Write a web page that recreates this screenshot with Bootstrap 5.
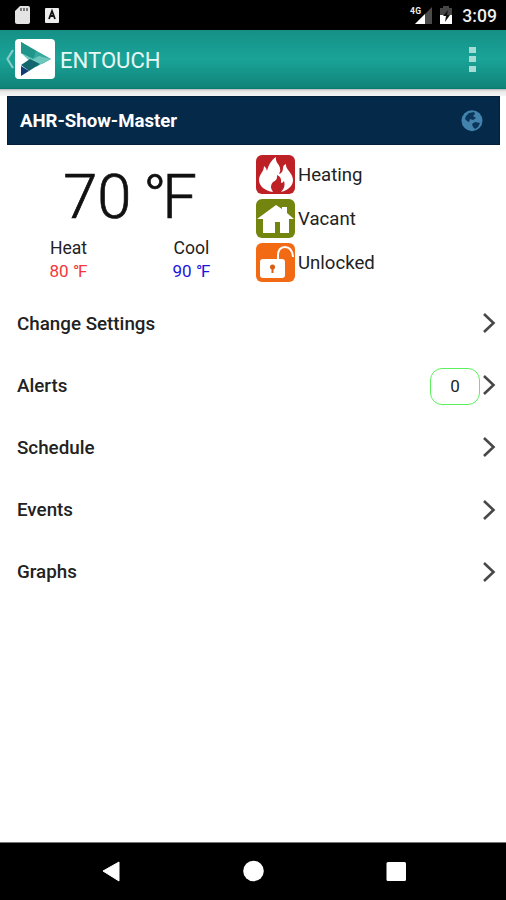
<!DOCTYPE html>
<html lang="en">
<head>
<meta charset="utf-8">
<meta name="viewport" content="width=device-width, initial-scale=1">
<title>ENTOUCH</title>
<link href="https://cdn.jsdelivr.net/npm/bootstrap@5.3.0/dist/css/bootstrap.min.css" rel="stylesheet">
<style>
body{font-family:Roboto,sans-serif;height:900px;color:#222;overflow:hidden;line-height:1}
svg{display:block;flex:none}
.status{height:30px;background:#000;padding:0 9px 0 14px}
.clock{font-size:17.6px;font-weight:500;color:#eee;margin-left:8px;padding-top:3px}
.network{font-size:8.5px}
.appbar{height:59px;background:linear-gradient(#159086,#1aa398 50%,#108378);border-bottom:1px solid #087a70;padding:0 28px 0 5px}
.title{font-size:22.1px;color:#e8f8f5;margin-left:5px;padding-top:3px}
.under{height:7px;background:linear-gradient(#b5b9b9,#eaeaea 35%,#f5f5f5)}
.unit{height:49px;margin:0 6px 0 7px;background:#052a49;border:1px solid #031f3b;padding:0 16px 0 12px}
.unit-name{font-size:18.6px;font-weight:700;color:#fff;padding-top:2px}
.readings{height:148px}
.temps{width:246px;margin-left:7px;padding-top:19px}
.now{font-size:61.5px;font-weight:300;-webkit-text-stroke:.7px #111;color:#111;line-height:66px;word-spacing:-.05em}
.deg{letter-spacing:-.07em}
.point{width:123px;font-size:17.6px;line-height:23px;padding-top:7px}
.point .heat,.point .cool{font-size:17px}
.heat{color:#f5363a}.cool{color:#1c16dc}
.states{margin:7px 0 0 3px}
.state{height:44.3px;font-size:18.6px;gap:3px}
.state span{padding-top:2px}
.entry{height:62.2px;padding:0 11px 0 17px;font-size:18.8px;font-weight:500;border:0}
.entry svg{margin-right:-1px}
.count{width:50px;height:37px;border:1.5px solid #5df05d;border-radius:12px;font-size:17px;font-weight:400;margin-right:2px}
.keys{height:58px;background:#000;border-top:1px solid #777}
.keys svg{width:100%}
</style>
<script src="https://cdn.jsdelivr.net/npm/bootstrap@5.3.0/dist/js/bootstrap.bundle.min.js"></script>
</head>
<body class="d-flex flex-column bg-white">
<div class="status d-flex align-items-center justify-content-between">
  <svg width="48" height="30"><path d="M6 6H14Q16 6 16 8V22Q16 24 14 24H3Q1 24 1 22V11Z" fill="#e4e4e4"/><path d="M7 8v3M10 8v3M13 8v3" stroke="#444" stroke-width="1.3"/><rect x="31" y="8" width="14" height="15" rx="1" fill="#eee"/><path d="M35 19l3-8 3 8M36.3 16h3.4" fill="none" stroke="#111" stroke-width="1.8"/></svg>
  <div class="d-flex align-items-center">
    <svg width="48" height="30"><text class="network" x="4" y="13.5" fill="#eee" font-weight="700" textLength="11">4G</text><path d="M26 7V24H9Z" fill="#4b4b4b"/><path d="M19 14V24H9Z" fill="#fff"/><path d="M37 6h6v2h3v16H34V8h3z" fill="#464646"/><path d="M34 15h12v9H34z" fill="#fff"/><path d="M42 10l-5 6h3l-1 6 5-7h-3z" fill="#111"/></svg>
    <span class="clock">3:09</span>
  </div>
</div>
<nav class="appbar d-flex align-items-center justify-content-between">
  <div class="d-flex align-items-center">
    <svg width="50" height="42"><path d="M8 12L2.5 21 8 30" fill="none" stroke="#86cec7" stroke-width="2.2"/><rect x="10" y="1" width="40" height="40" rx="4" fill="#fff"/><path d="M16 4L46 21 37 26 16 15Z" fill="#35a99d"/><path d="M16 4L31 13 28 21 16 15Z" fill="#22958b"/><path d="M16 15L28 21 34 18 46 21 31 29Z" fill="#6ec7bd"/><path d="M16 27L25 21 35 26 24 33Z" fill="#13666e"/><path d="M16 28L24 33 16 38Z" fill="#143b75"/></svg>
    <span class="title">ENTOUCH</span>
  </div>
  <svg width="11" height="30"><path d="M2 3h7v6H2zM2 12h7v6H2zM2 22h7v6H2z" fill="#a6dcd6"/></svg>
</nav>
<div class="under"></div>
<main class="flex-grow-1">
  <header class="unit d-flex align-items-center justify-content-between">
    <span class="unit-name">AHR-Show-Master</span>
    <svg width="22" height="22"><circle cx="11" cy="10.7" r="10.5" fill="#4382ad"/><path d="M5 6L8 3 13 2 14 4 12 6 15 8 12 10 9 9 8 12 6 11 4 9Z" fill="#0b355b"/><path d="M11 14L14 12 19 13 17 17 14 19 12 17Z" fill="#0b355b"/></svg>
  </header>
  <section class="readings d-flex">
    <div class="temps text-center">
      <div class="now">70 <span class="deg">°</span>F</div>
      <div class="d-flex">
        <div class="point">Heat<br><span class="heat">80 <span class="deg">°</span>F</span></div>
        <div class="point">Cool<br><span class="cool">90 <span class="deg">°</span>F</span></div>
      </div>
    </div>
    <div class="states">
      <div class="state d-flex align-items-center"><svg width="39" height="39"><rect width="39" height="39" rx="6" fill="#bd2025"/><path d="M20 2C19 7 23 9 24 13Q25 16 23 19Q27 18 27 13Q27 10 30 9C29 14 37 18 37 25C37 31 32 35 25 37Q30 32 28 26Q27 28 25 28Q26 22 21 20Q22 25 17 27Q13 31 17 37C9 36 3 31 3 25C3 19 8 17 8 11Q11 13 11 16C12 11 15 5 20 2Z" fill="#fff"/></svg><span>Heating</span></div>
      <div class="state d-flex align-items-center"><svg width="39" height="39"><rect width="39" height="39" rx="6" fill="#73840f"/><path d="M1 20L20 6 26 10V8H31V14L38 20H33V34H24V23H19V34H7V20Z" fill="#fff"/></svg><span>Vacant</span></div>
      <div class="state d-flex align-items-center"><svg width="39" height="39"><rect width="39" height="39" rx="6" fill="#f26a14"/><rect x="4" y="16" width="25" height="19" rx="3" fill="#fff"/><path d="M22 16V13Q22 4 29 4Q36 4 37 14" fill="none" stroke="#fff" stroke-width="2"/><circle cx="16.5" cy="24" r="2.5" fill="#d95d12"/><path d="M16.5 24V30" stroke="#d95d12" stroke-width="2"/></svg><span>Unlocked</span></div>
    </div>
  </section>
  <div class="list-group list-group-flush">
    <div class="entry d-flex align-items-center"><span class="me-auto">Change Settings</span><svg width="14" height="24"><path d="M2 2L11.5 11 2 20" fill="none" stroke="#484848" stroke-width="2.6"/></svg></div>
    <div class="entry d-flex align-items-center"><span class="me-auto">Alerts</span><span class="count d-flex align-items-center justify-content-center">0</span><svg width="14" height="24"><path d="M2 2L11.5 11 2 20" fill="none" stroke="#484848" stroke-width="2.6"/></svg></div>
    <div class="entry d-flex align-items-center"><span class="me-auto">Schedule</span><svg width="14" height="24"><path d="M2 2L11.5 11 2 20" fill="none" stroke="#484848" stroke-width="2.6"/></svg></div>
    <div class="entry d-flex align-items-center"><span class="me-auto">Events</span><svg width="14" height="24"><path d="M2 2L11.5 11 2 20" fill="none" stroke="#484848" stroke-width="2.6"/></svg></div>
    <div class="entry d-flex align-items-center"><span class="me-auto">Graphs</span><svg width="14" height="24"><path d="M2 2L11.5 11 2 20" fill="none" stroke="#484848" stroke-width="2.6"/></svg></div>
  </div>
</main>
<footer class="keys"><svg width="506" height="57" fill="#fff"><path d="M103 28L119 19V38Z" stroke="#fff" stroke-linejoin="round"/><circle cx="253.5" cy="28" r="10.3"/><rect x="386.5" y="19" width="19.5" height="19" rx="1.5"/></svg></footer>
</body>
</html>
